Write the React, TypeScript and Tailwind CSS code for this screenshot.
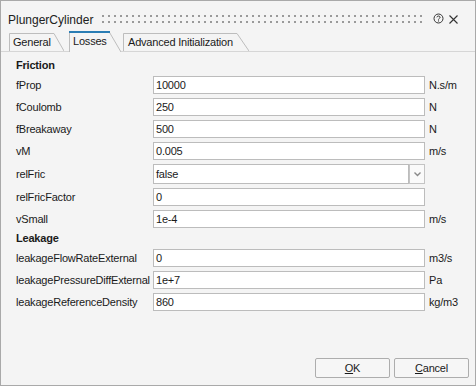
import React from 'react';

type Row = { label: string; value: string; unit?: string; combo?: boolean };

const friction: Row[] = [
    { label: 'fProp', value: '10000', unit: 'N.s/m' },
    { label: 'fCoulomb', value: '250', unit: 'N' },
    { label: 'fBreakaway', value: '500', unit: 'N' },
    { label: 'vM', value: '0.005', unit: 'm/s' },
    { label: 'relFric', value: 'false', combo: true },
    { label: 'relFricFactor', value: '0' },
    { label: 'vSmall', value: '1e-4', unit: 'm/s' },
];

const leakage: Row[] = [
    { label: 'leakageFlowRateExternal', value: '0', unit: 'm3/s' },
    { label: 'leakagePressureDiffExternal', value: '1e+7', unit: 'Pa' },
    { label: 'leakageReferenceDensity', value: '860', unit: 'kg/m3' },
];

function Tab({ text, width, height, slant, active, className }: { text: string; width: number; height: number; slant: number; active?: boolean; className: string }) {
    return (
        <div className={`relative shrink-0 ${className}`} style={{ width, height }}>
            <svg className="absolute inset-0" width={width} height={height}>
                <path d={`M0.5 ${height} V0.5 H${width - slant} L${width} ${height}`} fill="#f4f4f4" stroke="#bdbdbd" />
                {active && <rect x="0" y="0" width={width - slant + 1} height="2" fill="#2a7db4" />}
            </svg>
            <span className="relative block leading-[13px]">{text}</span>
        </div>
    );
}

function Field({ row }: { row: Row }) {
    if (row.combo) {
        return (
            <div className="flex h-[20px] w-[272px]">
                <div className="flex-1 border border-[#bcbcbc] bg-white pl-[2px] leading-[18px]">{row.value}</div>
                <div className="flex w-[16px] items-center justify-center border border-[#c4c4c4] bg-[#fafafa]">
                    <svg width="7" height="5" viewBox="0 0 7 5">
                        <path d="M0.5 0.5 L3.5 3.5 L6.5 0.5" fill="none" stroke="#8a8a8a" strokeWidth="1.4" />
                    </svg>
                </div>
            </div>
        );
    }
    return (
        <div className="h-[18px] w-[272px] border border-[#bcbcbc] bg-white pl-[2px] leading-[16px]">{row.value}</div>
    );
}

function FieldRow({ row }: { row: Row }) {
    return (
        <div className="flex items-center">
            <div className="w-[137px] shrink-0 leading-[13px]">{row.label}</div>
            <Field row={row} />
            {row.unit && <div className="ml-[4px] leading-[13px]">{row.unit}</div>}
        </div>
    );
}

export default function App() {
    return (
        <div className="flex h-[386px] w-[476px] flex-col border border-[#a9a9a9] bg-[#f4f4f4] font-['Liberation_Sans',Arial,sans-serif] text-[11px] tracking-[-0.2px] text-[#1a1a1a]">

            <div className="flex h-[30px] shrink-0 items-start">
                <div className="w-[100px] shrink-0 pl-[7px] pt-[12px] text-[12px] leading-[14px] tracking-normal text-[#202020]">PlungerCylinder</div>
                <svg className="ml-px mt-[14px] shrink-0" width="320" height="8">
                    <defs>
                        <pattern id="grip" width="6" height="6" patternUnits="userSpaceOnUse">
                            <rect x="0" y="0" width="2" height="2" fill="#9a9a9a" />
                        </pattern>
                    </defs>
                    <rect x="0" y="0" width="320" height="8" fill="url(#grip)" />
                </svg>
                <svg className="ml-[11px] mt-[12px] shrink-0" width="11" height="11" viewBox="0 0 11 11">
                    <circle cx="5.5" cy="5.5" r="4.5" fill="none" stroke="#333" strokeWidth="1" />
                    <path d="M3.9 4.3 C3.9 2.6 7.1 2.6 7.1 4.3 C7.1 5.4 5.5 5.4 5.5 6.6" fill="none" stroke="#333" strokeWidth="1" />
                    <rect x="5" y="7.4" width="1" height="1.1" fill="#333" />
                </svg>
                <svg className="ml-[5px] mt-[14px] shrink-0" width="9" height="9" viewBox="0 0 9 9">
                    <path d="M0.5 0.5 L8.5 8.5 M8.5 0.5 L0.5 8.5" stroke="#333" strokeWidth="1.1" />
                </svg>
            </div>

            <div className="flex h-[21px] shrink-0 items-end border-b border-[#d6d6d6] pl-[8px]">
                <Tab text="General" width={55} height={18} slant={10} className="pl-[4px] pt-[3px]" />
                <Tab text="Losses" width={52} height={21} slant={12} active className="-mb-px ml-[5px] pl-[4px] pt-[4px]" />
                <Tab text="Advanced Initialization" width={126} height={18} slant={12} className="ml-[2px] pl-[5px] pt-[3px]" />
            </div>

            <div className="flex flex-col gap-[4px] pl-[15px] pt-[7px]">
                <div className="font-bold leading-[13px]">Friction</div>
                {friction.map((r) => <FieldRow key={r.label} row={r} />)}
                <div className="font-bold leading-[13px]">Leakage</div>
                {leakage.map((r) => <FieldRow key={r.label} row={r} />)}
            </div>

            <div className="mt-auto flex justify-end gap-[4px] pb-[7px] pr-[6px]">
                <button className="h-[20px] w-[75px] rounded-[2px] border border-[#adadad] bg-[#f6f6f6] leading-[18px]"><span className="underline">O</span>K</button>
                <button className="h-[20px] w-[75px] rounded-[2px] border border-[#adadad] bg-[#f6f6f6] leading-[18px]"><span className="underline">C</span>ancel</button>
            </div>
        </div>
    );
}
